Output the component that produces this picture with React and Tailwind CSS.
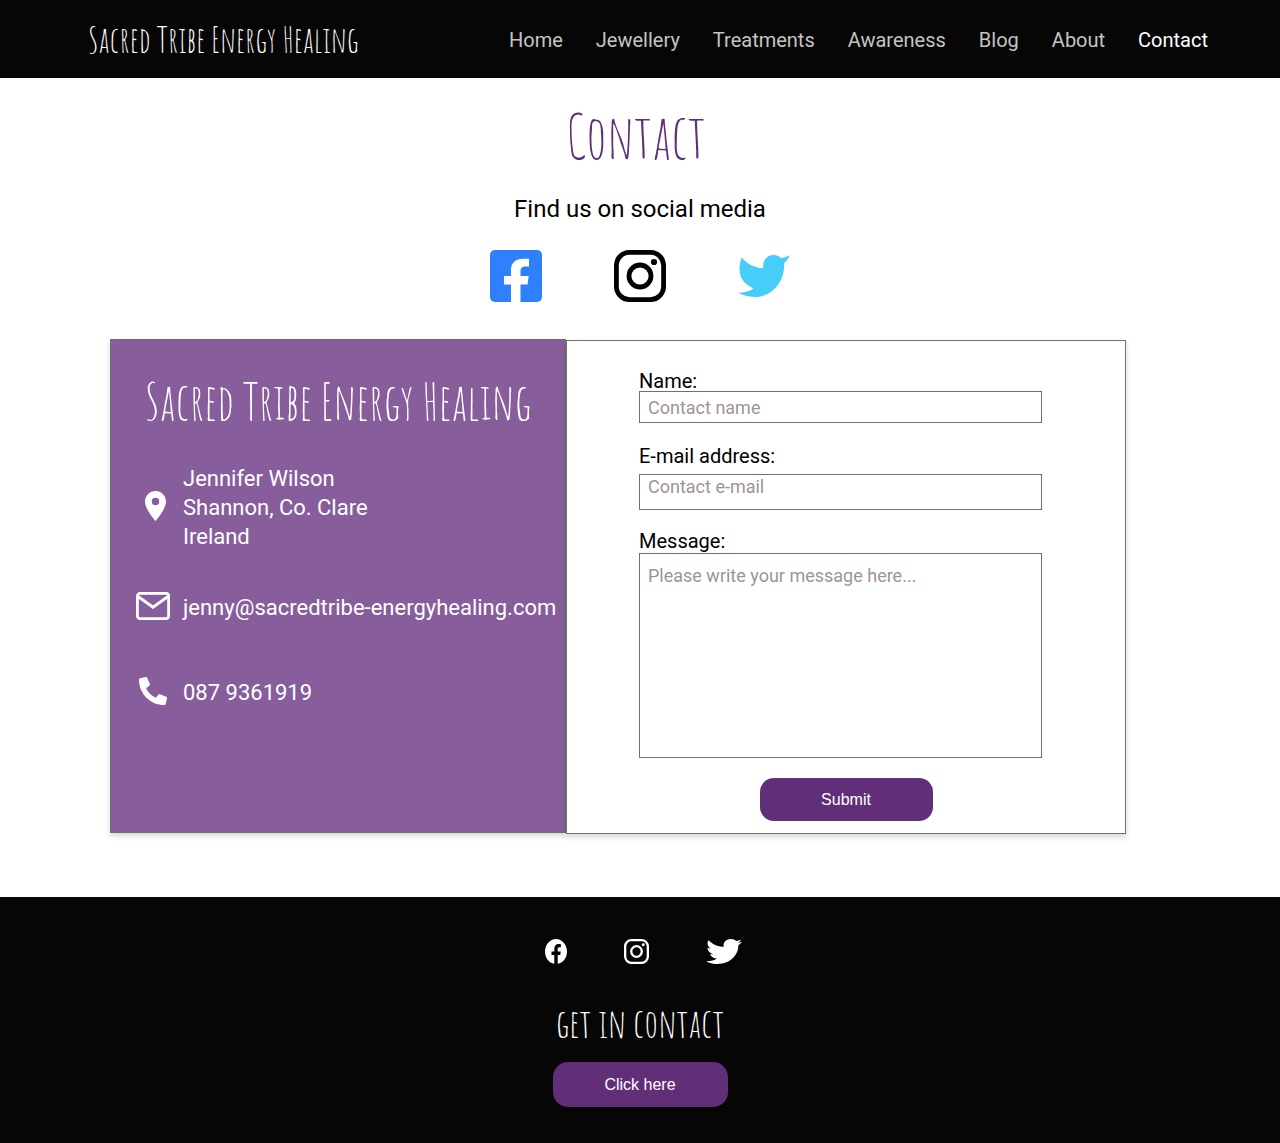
import { FaFacebook, FaPhoneAlt, FaTwitter } from "react-icons/fa";
import { MdLocationOn } from "react-icons/md";

const display =
  "font-['Amatic_SC','Liberation_Sans_Narrow','Liberation_Sans',sans-serif] font-normal whitespace-nowrap";

const links = ["Home", "Jewellery", "Treatments", "Awareness", "Blog", "About", "Contact"];

function FacebookSquare() {
  return (
    <svg className="size-[52px]" viewBox="0 0 52 52" aria-hidden="true">
      <path
        fill="#2f80ff"
        fillRule="evenodd"
        d="M5 0H47a5 5 0 0 1 5 5v42a5 5 0 0 1-5 5H30.500V34.500H37.500L38.700 26H30.500V21C30.500 18 32 16.500 35 16.500H39V8.700H33C25.500 8.700 21 13 21 20V26H14V34.500H21V52H5A5 5 0 0 1 0 47V5A5 5 0 0 1 5 0Z"
      />
    </svg>
  );
}

function Instagram({ className }) {
  return (
    <svg className={className} viewBox="0 0 52 52" fill="none" stroke="currentColor" strokeWidth="4.800" aria-hidden="true">
      <rect x="2.400" y="2.400" width="47.200" height="47.200" rx="13" />
      <circle cx="26" cy="26" r="11" />
      <circle cx="40" cy="12" r="3.100" fill="currentColor" stroke="none" />
    </svg>
  );
}

function TwitterBird() {
  return (
    <svg className="h-[42px] w-[52px]" viewBox="0 0 52 42" fill="#46cdfa" aria-hidden="true">
      <path d="M3.700 2.500C9 9 16.500 12.800 25.200 13.200V10.500C25.200 4.300 29.800 0 35.500 0C38.600 0 41.300 1.200 43.200 3.200C46 3 49 1.600 51.500.300C50.500 3.800 48.500 6.300 46.200 8.200C46.800 28 33 42 16.500 42C10.500 42 5 40.500 0 37.600C6 38 11.500 36.500 15.600 33.300C5 29 .800 21 1.600 11.500C1.800 8.500 2.600 5.300 3.700 2.500Z" />
    </svg>
  );
}

function Mail() {
  return (
    <svg className="h-7 w-[34px]" viewBox="0 0 34 28" fill="none" stroke="currentColor" strokeWidth="2.800" aria-hidden="true">
      <rect x="1.400" y="1.400" width="31.200" height="25.200" rx="2.600" />
      <path d="M2 4.500L17 15.200L32 4.500" />
    </svg>
  );
}

function ContactRow({ icon, children }) {
  return (
    <div className="flex items-center">
      <span className="-mt-1 flex w-[72px] shrink-0 justify-center pl-3">{icon}</span>
      <div className="whitespace-nowrap text-[22px] leading-[29px]">{children}</div>
    </div>
  );
}

const field =
  "block w-full rounded-none border border-[#707070] bg-white px-2 text-lg leading-6 placeholder:text-[#9f9494] placeholder:opacity-100";

export default function App() {
  return (
    <div className="bg-white font-[Roboto,sans-serif] text-black">
      <header className="flex h-[78px] items-center justify-between border-b border-black bg-[#060606] pl-[88px] pr-[72px] pt-[3px]">
        <a href="#home" className={`${display} text-[35px] leading-10 text-white`}>
          Sacred Tribe Energy Healing
        </a>
        <nav className="flex gap-[33px] text-xl">
          {links.map((l) => (
            <a key={l} href={`#${l.toLowerCase()}`} className={l === "Contact" ? "text-white" : "text-[#c4c4c4]"}>
              {l}
            </a>
          ))}
        </nav>
      </header>

      <main className="pb-[63px]">
        <h1 className={`${display} pr-2 pt-5 text-center text-[60px] leading-[76px] text-[#612f77]`}>Contact</h1>
        <p className="pt-[19px] text-center text-2xl leading-8">Find us on social media</p>
        <div className="flex items-center justify-center gap-[72px] pt-[25px]">
          <a href="#facebook" aria-label="Facebook"><FacebookSquare /></a>
          <a href="#instagram" aria-label="Instagram"><Instagram className="size-[52px]" /></a>
          <a href="#twitter" aria-label="Twitter"><TwitterBird /></a>
        </div>

        <div className="grid grid-cols-[456fr_560fr] pl-[110px] pr-[154px] pt-[37px]">
          <section className="mb-px border border-[#707070] bg-[#875e9b] text-white shadow-[0_3px_6px_rgba(0,0,0,0.16)]">
            <h2 className={`${display} pt-[25px] text-center text-[50px] leading-[72px]`}>Sacred Tribe Energy Healing</h2>
            <address className="flex flex-col pt-[27px] not-italic">
              <ContactRow icon={<MdLocationOn viewBox="5 2 14 20" className="ml-1 h-[30px] w-[21px]" />}>
                Jennifer Wilson
                <br />
                Shannon, Co. Clare
                <br />
                Ireland
              </ContactRow>
              <div className="h-[42px]" />
              <ContactRow icon={<Mail />}>
                <a href="mailto:jenny@sacredtribe-energyhealing.com">jenny@sacredtribe-energyhealing.com</a>
              </ContactRow>
              <div className="h-14" />
              <ContactRow icon={<FaPhoneAlt className="size-7" />}>
                <a href="tel:0879361919">087 9361919</a>
              </ContactRow>
            </address>
          </section>

          <form
            className="mt-px border border-[#707070] bg-white pb-3 pl-[72px] pr-[83px] pt-[30px] shadow-[0_3px_6px_rgba(0,0,0,0.16)]"
            onSubmit={(e) => e.preventDefault()}
          >
            <label htmlFor="name" className="block text-xl leading-5">Name:</label>
            <input id="name" placeholder="Contact name" className={`${field} h-8`} />
            <label htmlFor="email" className="block pb-2 pt-[23px] text-xl leading-5">E-mail address:</label>
            <input id="email" type="email" placeholder="Contact e-mail" className={`${field} h-9 pb-3`} />
            <label htmlFor="message" className="block pb-0.5 pt-[21px] text-xl leading-5">Message:</label>
            <textarea id="message" placeholder="Please write your message here..." className={`${field} h-[205px] resize-none pt-2.5`} />
            <div className="-mr-[11px] flex justify-center pt-5">
              <button className="h-[43px] w-[173px] rounded-[14px] bg-[#612f77] font-['Liberation_Sans',sans-serif] text-base text-white">
                Submit
              </button>
            </div>
          </form>
        </div>
      </main>

      <footer className="flex flex-col items-center bg-[#060606] pb-9 pt-[42px] text-white">
        <div className="flex items-center gap-[57px] pl-1.5">
          <a href="#facebook" aria-label="Facebook">
            <FaFacebook viewBox="8 8 496 496" preserveAspectRatio="none" className="h-[25px] w-[22px]" />
          </a>
          <a href="#instagram" aria-label="Instagram"><Instagram className="size-[25px]" /></a>
          <a href="#twitter" aria-label="Twitter">
            <FaTwitter viewBox="0 48 512 416" preserveAspectRatio="none" className="h-[25px] w-9" />
          </a>
        </div>
        <h2 className={`${display} pt-[35px] text-[40px] leading-[48px]`}>get in contact</h2>
        <button className="mt-[15px] h-[45px] w-[175px] rounded-[15px] bg-[#612f77] font-['Liberation_Sans',sans-serif] text-base">
          Click here
        </button>
      </footer>
    </div>
  );
}
